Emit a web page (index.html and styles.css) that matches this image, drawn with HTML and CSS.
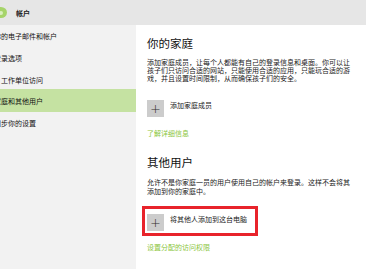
FILE: index.html
```html
<!DOCTYPE html>
<html lang="zh-CN">
<head>
<meta charset="utf-8">
<link rel="stylesheet" href="styles.css">
</head>
<body>
<div class="app">
  <header class="topbar">
    <span class="logo"><span class="logo-dot"></span></span>
    <span class="title">帐户</span>
  </header>
  <div class="main">
    <nav class="sidebar">
      <div class="nav-item">你的电子邮件和帐户</div>
      <div class="nav-item">登录选项</div>
      <div class="nav-item work">工作单位访问</div>
      <div class="nav-item active">家庭和其他用户</div>
      <div class="nav-item">同步你的设置</div>
    </nav>
    <section class="content">
      <h1 class="heading">你的家庭</h1>
      <p class="para">添加家庭成员，让每个人都能有自己的登录信息和桌面。你可以让孩子们只访问合适的网站，只能使用合适的应用，只能玩合适的游戏，并且设置时间限制，从而确保孩子们的安全。</p>
      <div class="add-row">
        <span class="plus-box">+</span>
        <span class="add-label">添加家庭成员</span>
      </div>
      <a class="link link-info">了解详细信息</a>
      <h1 class="heading heading-2">其他用户</h1>
      <p class="para para-2">允许不是你家庭一员的用户使用自己的帐户来登录。这样不会将其添加到你的家庭中。</p>
      <div class="highlight">
        <div class="add-row">
          <span class="plus-box">+</span>
          <span class="add-label">将其他人添加到这台电脑</span>
        </div>
      </div>
      <a class="link link-access">设置分配的访问权限</a>
    </section>
  </div>
</div>
</body>
</html>
```

FILE: styles.css
```css
* { box-sizing: border-box; margin: 0; padding: 0; }
html, body { width: 366px; height: 269px; overflow: hidden; background: #ffffff; }
body {
  font-family: "Noto Sans CJK SC", "Noto Sans", sans-serif;
  color: #111;
}
.app { display: flex; flex-direction: column; width: 366px; height: 269px; }
.topbar {
  height: 25px;
  background: #e6e6e6;
  display: flex;
  align-items: center;
  flex-shrink: 0;
}
.logo {
  width: 12px; height: 11px;
  margin-left: -5px;
  border-radius: 50%;
  background: #a6d46a;
  display: flex; align-items: center; justify-content: center;
}
.logo-dot { width: 4px; height: 4px; border-radius: 50%; background: #d9efbe; }
.title {
  margin-left: 9px;
  font-size: 7px;
  font-weight: 700;
  line-height: 10px;
  color: #1a1a1a;
}
.main { display: flex; flex: 1; }
.sidebar {
  width: 136px;
  background: #f2f2f2;
  display: flex;
  flex-direction: column;
}
.nav-item {
  height: 22px;
  display: flex;
  align-items: center;
  margin-left: -6px;
  font-size: 7px;
  color: #111;
  white-space: nowrap;
}
.nav-item.work { margin-left: 1px; }
.nav-item.active { background: #c5e2a2; margin-left: 0; text-indent: -6px; margin-top: -2px; height: 23px; }
.content {
  flex: 1;
  padding: 11px 0 0 11px;
  display: flex;
  flex-direction: column;
  align-items: flex-start;
}
.heading {
  font-size: 11.5px;
  font-weight: 400;
  line-height: 14px;
  color: #111;
}
.para {
  width: 205px;
  margin-top: 8px;
  font-size: 7px;
  line-height: 8px;
  color: #1a1a1a;
}
.add-row {
  display: flex;
  align-items: flex-start;
  margin-top: 18px;
}
.plus-box {
  width: 17px; height: 17px;
  background: #cccccc;
  display: flex; align-items: center; justify-content: center;
  font-family: "DejaVu Sans", sans-serif;
  font-size: 13px;
  font-weight: 300;
  line-height: 1;
  color: #333;
}
.add-label {
  margin-left: 6px;
  font-size: 7px;
  line-height: 10px;
  color: #1a1a1a;
}
.link {
  font-size: 7px;
  line-height: 10px;
  color: #8cc63e;
}
.link-info { margin-top: 11px; }
.heading-2 { margin-top: 17px; }
.para-2 { margin-top: 9px; line-height: 9px; }
.highlight {
  margin-top: 10px;
  margin-left: -5px;
  width: 116px;
  border: 3px solid #e8232b;
  padding: 5px 0 2px 2px;
}
.highlight .add-row { margin-top: 0; }
.link-access { margin-top: 6px; }
```
